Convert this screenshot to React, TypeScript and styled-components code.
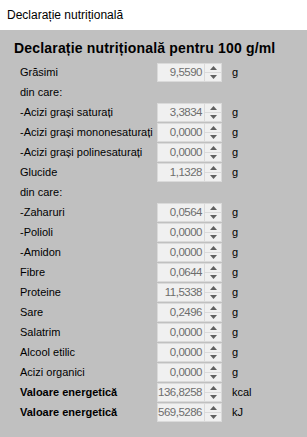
import styled, { createGlobalStyle } from 'styled-components'

type Row = {
  label: string
  value?: string
  unit?: string
  bold?: boolean
}

const rows: Row[] = [
  { label: 'Grăsimi', value: '9,5590', unit: 'g' },
  { label: 'din care:' },
  { label: '-Acizi grași saturați', value: '3,3834', unit: 'g' },
  { label: '-Acizi grași mononesaturați', value: '0,0000', unit: 'g' },
  { label: '-Acizi grași polinesaturați', value: '0,0000', unit: 'g' },
  { label: 'Glucide', value: '1,1328', unit: 'g' },
  { label: 'din care:' },
  { label: '-Zaharuri', value: '0,0564', unit: 'g' },
  { label: '-Polioli', value: '0,0000', unit: 'g' },
  { label: '-Amidon', value: '0,0000', unit: 'g' },
  { label: 'Fibre', value: '0,0644', unit: 'g' },
  { label: 'Proteine', value: '11,5338', unit: 'g' },
  { label: 'Sare', value: '0,2496', unit: 'g' },
  { label: 'Salatrim', value: '0,0000', unit: 'g' },
  { label: 'Alcool etilic', value: '0,0000', unit: 'g' },
  { label: 'Acizi organici', value: '0,0000', unit: 'g' },
  { label: 'Valoare energetică', value: '136,8258', unit: 'kcal', bold: true },
  { label: 'Valoare energetică', value: '569,5286', unit: 'kJ', bold: true },
]

const GlobalStyle = createGlobalStyle`
  html, body {
    margin: 0;
    padding: 0;
    background: #c0c0c0;
  }
  body {
    font-family: "Liberation Sans", Arial, sans-serif;
  }
`

function Arrow({ up }: { up?: boolean }) {
  return (
    <svg width="7" height="4" viewBox="0 0 7 4">
      {up ? <path d="M0 4 L3.5 0 L7 4 Z" fill="#606060" /> : <path d="M0 0 L3.5 4 L7 0 Z" fill="#606060" />}
    </svg>
  )
}

function SpinBox({ value }: { value: string }) {
  return (
    <Spin>
      <SpinValue>{value}</SpinValue>
      <SpinButtons>
        <SpinButton><Arrow up /></SpinButton>
        <SpinButton><Arrow /></SpinButton>
      </SpinButtons>
    </Spin>
  )
}

export default function App() {
  return (
    <>
      <GlobalStyle />
      <Window>
        <TitleBar>Declarație nutrițională</TitleBar>
        <Panel>
          <Heading>Declarație nutrițională pentru 100 g/ml</Heading>
          <Rows>
            {rows.map((row, i) => (
              <RowLine key={i}>
                <Label $bold={row.bold}>{row.label}</Label>
                {row.value ? <SpinBox value={row.value} /> : <span />}
                <Unit>{row.unit}</Unit>
              </RowLine>
            ))}
          </Rows>
        </Panel>
      </Window>
    </>
  )
}

const Window = styled.div`
  width: 307px;
  height: 437px;
  display: flex;
  flex-direction: column;
  overflow: hidden;
`

const TitleBar = styled.div`
  height: 30px;
  flex-shrink: 0;
  display: flex;
  align-items: center;
  padding-left: 7px;
  background: #ffffff;
  color: #000;
  font-size: 12px;
`

const Panel = styled.div`
  flex: 1;
  background: #c0c0c0;
  padding: 9px 0 0 14px;
`

const Heading = styled.div`
  font-size: 14px;
  font-weight: bold;
  letter-spacing: 0.18px;
  color: #000;
  height: 22px;
  line-height: 18px;
`

const Rows = styled.div`
  display: flex;
  flex-direction: column;
  padding-left: 6px;
  margin-top: 1px;
`

const RowLine = styled.div`
  display: grid;
  grid-template-columns: 137px 65px 1fr;
  align-items: center;
  height: 20px;
`

const Label = styled.div<{ $bold?: boolean }>`
  font-size: 11px;
  font-weight: ${p => (p.$bold ? 'bold' : 'normal')};
  color: #000;
  white-space: nowrap;
`

const Unit = styled.div`
  font-size: 11px;
  color: #000;
  padding-left: 10px;
`

const Spin = styled.div`
  box-sizing: border-box;
  height: 19px;
  display: flex;
  border: 1px solid #dadada;
  background: #f0f0f0;
`

const SpinValue = styled.div`
  flex: 1;
  min-width: 0;
  text-align: right;
  font-size: 11.5px;
  letter-spacing: -0.5px;
  line-height: 17px;
  color: #6d6d6d;
  padding-right: 2px;
  white-space: nowrap;
`

const SpinButtons = styled.div`
  width: 16px;
  flex-shrink: 0;
  display: flex;
  flex-direction: column;
  border-left: 1px solid #dadada;
`

const SpinButton = styled.div`
  flex: 1;
  display: flex;
  align-items: center;
  justify-content: center;
  background: #f0f0f0;

  & + & {
    border-top: 1px solid #dadada;
  }
`
